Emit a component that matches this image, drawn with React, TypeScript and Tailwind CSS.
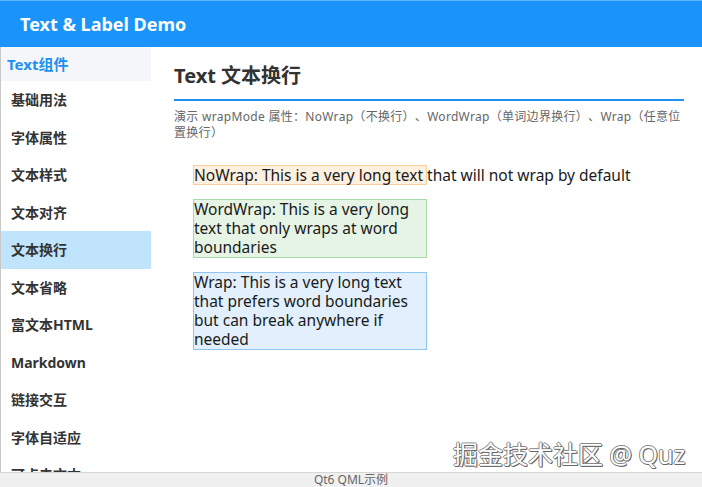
import React from "react";

const items = ["基础用法", "字体属性", "文本样式", "文本对齐", "文本换行", "文本省略", "富文本HTML", "Markdown", "链接交互", "字体自适应", "可点击文本"];

export default function App() {
  const font = { fontFamily: '"Noto Sans", "Noto Sans CJK SC", sans-serif' };
  return (
    <div className="relative w-[702px] h-[487px] overflow-hidden bg-white flex flex-col" style={font}>
      <div className="h-[47px] shrink-0 bg-[#1a94fb] border-t border-[#5cb6fb] flex items-center pl-[20px]">
        <span className="text-white font-bold text-[18px] leading-none">Text &amp; Label Demo</span>
      </div>
      <div className="flex flex-1 min-h-0 border-l border-[#c8c8c8]">
        <div className="w-[150px] shrink-0 flex flex-col">
          <div className="h-[34px] shrink-0 bg-[#f4f6f9] flex items-center pl-[6px] text-[#1e90f0] font-bold text-[15px]">Text组件</div>
          {items.map((t) => (
            <div
              key={t}
              className={`h-[37.5px] shrink-0 flex items-center pl-[10px] text-[14px] font-bold text-[#333] ${t === "文本换行" ? "bg-[#bfe4fb]" : ""}`}
            >
              {t}
            </div>
          ))}
        </div>
        <div className="flex-1 pl-[23px] pr-[18px] pt-[15px]">
          <div className="text-[20px] font-bold text-[#333] leading-[28px]">Text 文本换行</div>
          <div className="mt-[9px] h-[2px] bg-[#1e90f0]" />
          <div className="mt-[8px] text-[12px] leading-[16px] text-[#666] tracking-[0.3px] [text-spacing-trim:space-all]">
            演示 wrapMode 属性：NoWrap（不换行）、WordWrap（单词边界换行）、Wrap（任意位置换行）
          </div>
          <div className="mt-[24px] ml-[19px] flex flex-col gap-[14px] text-[15.5px] leading-[19px] text-[#1a1a1a]">
            <div className="w-[234px] h-[20px] bg-[#fdf0df] border border-[#f7cf9f] whitespace-nowrap overflow-visible">
              NoWrap: This is a very long text that will not wrap by default
            </div>
            <div className="w-[234px] bg-[#e6f4e6] border border-[#a9d8a9]">
              WordWrap: This is a very long text that only wraps at word boundaries
            </div>
            <div className="w-[234px] bg-[#e1f0fc] border border-[#8fc5ef]">
              Wrap: This is a very long text that prefers word boundaries but can break anywhere if needed
            </div>
          </div>
        </div>
      </div>
      <div className="absolute left-0 right-0 bottom-0 h-[15px] bg-[#f0f0f0] border-t border-[#d6d6d6] flex items-center justify-center text-[12px] leading-none text-[#666]">
        Qt6 QML示例
      </div>
      <div
        className="absolute left-[453px] top-[439px] text-[25px] leading-[30px] text-white whitespace-nowrap"
        style={{ textShadow: "1px 1px 0 #666, -1px 0 0 #888, 0 -1px 0 #888, 1px 0 0 #777, 0 1px 0 #777" }}
      >
        掘金技术社区 @ Quz
      </div>
    </div>
  );
}
